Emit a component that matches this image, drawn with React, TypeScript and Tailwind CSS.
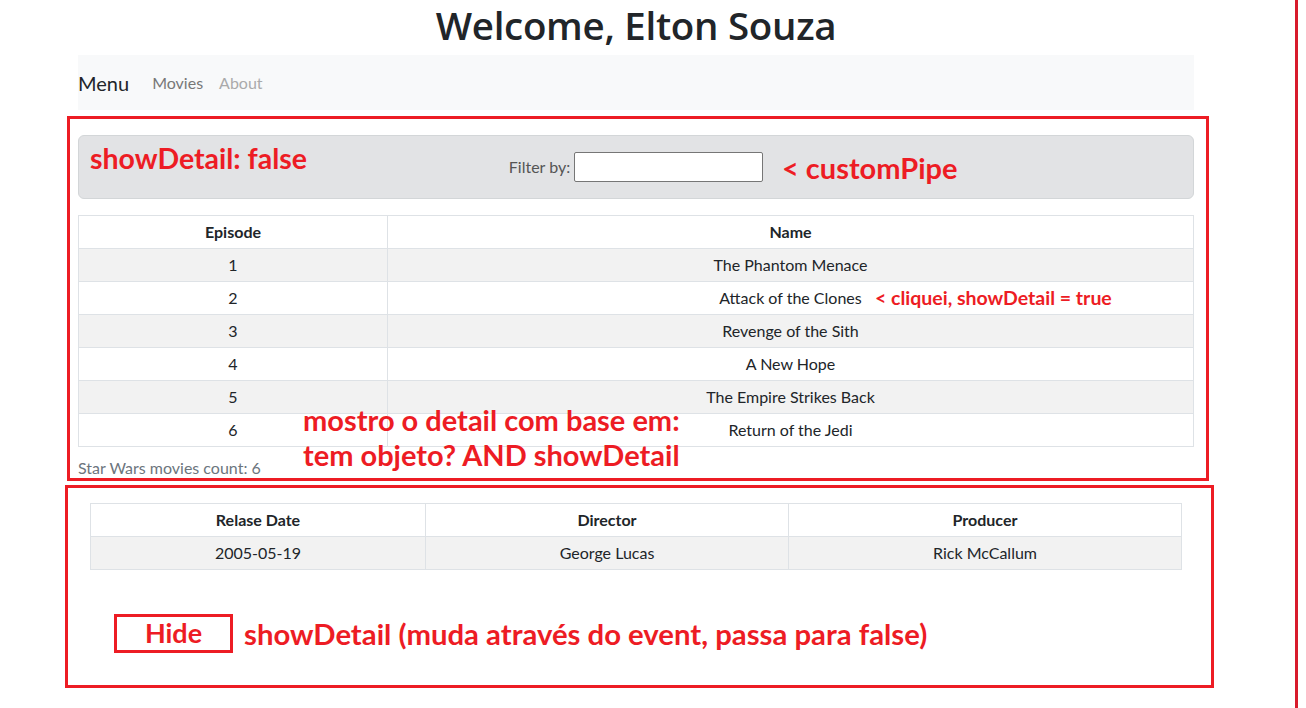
import React from "react";

const movies = [
  { ep: 1, name: "The Phantom Menace" },
  { ep: 2, name: "Attack of the Clones" },
  { ep: 3, name: "Revenge of the Sith" },
  { ep: 4, name: "A New Hope" },
  { ep: 5, name: "The Empire Strikes Back" },
  { ep: 6, name: "Return of the Jedi" },
];

const body = { fontFamily: "Lato, 'Open Sans', sans-serif" };
const anno = { fontFamily: "Lato, 'Noto Sans', sans-serif" };
const title = { fontFamily: "'Open Sans', Lato, sans-serif" };

export default function App() {
  return (
    <div className="relative w-[1306px] h-[708px] overflow-hidden bg-white text-[#212529]" style={body}>
      <div className="ml-[78px] w-[1116px] flex flex-col">
        <h1 className="text-center text-[38.5px] leading-[48px] font-semibold pt-[1px] tracking-[-0.3px]" style={title}>Welcome, Elton Souza</h1>
        <nav className="mt-[6px] h-[55px] bg-[#f8f9fa] flex items-center">
          <span className="text-[20px] text-[#212529]">Menu</span>
          <span className="ml-[23px] text-[16px] text-[#777]">Movies</span>
          <span className="ml-[16px] text-[16px] text-[#aaa]">About</span>
        </nav>
        <div className="mt-[25px] h-[64px] bg-[#e2e3e5] border border-[#d3d6d8] rounded-[6px] flex items-center justify-center">
          <label className="text-[16px] text-[#555] mr-[4px]">Filter by:</label>
          <input className="w-[189px] h-[30px] border border-[#767676] rounded-[2px] bg-white" />
        </div>
        <table className="mt-[16px] w-full border-collapse text-[16px] text-center">
          <thead>
            <tr className="h-[33px]">
              <th className="border border-[#dee2e6] w-[309px] font-bold">Episode</th>
              <th className="border border-[#dee2e6] font-bold">Name</th>
            </tr>
          </thead>
          <tbody>
            {movies.map((m, i) => (
              <tr key={m.ep} className={i % 2 === 0 ? "h-[33px] bg-[#f2f2f2]" : "h-[33px] bg-white"}>
                <td className="border border-[#dee2e6]">{m.ep}</td>
                <td className="border border-[#dee2e6]">{m.name}</td>
              </tr>
            ))}
          </tbody>
        </table>
        <div className="mt-[10px] text-[16px] leading-[22px] text-[#6c757d]">Star Wars movies count: 6</div>
        <div className="px-[12px] mt-[24px]">
          <table className="w-full border-collapse text-[16px] text-center">
            <thead>
              <tr className="h-[33px]">
                <th className="border border-[#dee2e6] w-[335px] font-bold">Relase Date</th>
                <th className="border border-[#dee2e6] w-[363px] font-bold">Director</th>
                <th className="border border-[#dee2e6] font-bold">Producer</th>
              </tr>
            </thead>
            <tbody>
              <tr className="h-[33px] bg-[#f2f2f2]">
                <td className="border border-[#dee2e6]">2005-05-19</td>
                <td className="border border-[#dee2e6]">George Lucas</td>
                <td className="border border-[#dee2e6]">Rick McCallum</td>
              </tr>
            </tbody>
          </table>
        </div>
      </div>

      {/* annotations */}
      <div className="absolute left-[67px] top-[116px] w-[1142px] h-[365px] border-[3px] border-[#ed1c24] pointer-events-none" />
      <div className="absolute left-[65px] top-[485px] w-[1149px] h-[203px] border-[3px] border-[#ed1c24] pointer-events-none" />
      <div className="absolute left-[1295px] top-0 w-[3px] h-[708px] bg-[#d81b2c]" />

      <div className="absolute left-[90px] top-[140px] text-[28.5px] leading-[36px] font-bold text-[#ed1c24]" style={anno}>showDetail: false</div>
      <div className="absolute left-[782px] top-[150px] text-[29px] leading-[36px] font-bold text-[#ed1c24]" style={anno}>&lt; customPipe</div>
      <div className="absolute left-[875px] top-[286px] text-[19.5px] leading-[24px] font-bold text-[#ed1c24]" style={anno}>&lt; cliquei, showDetail = true</div>
      <div className="absolute left-[303px] top-[402px] text-[29px] leading-[35px] font-bold text-[#ed1c24]" style={anno}>
        <div>mostro o detail com base em:</div>
        <div>tem objeto? AND showDetail</div>
      </div>
      <div className="absolute left-[114px] top-[614px] w-[119px] h-[39px] border-[3px] border-[#ed1c24] flex items-center justify-center text-[27px] font-bold text-[#ed1c24]" style={anno}>Hide</div>
      <div className="absolute left-[244px] top-[616px] text-[29.3px] leading-[36px] font-bold text-[#ed1c24]" style={anno}>showDetail (muda através do event, passa para false)</div>
    </div>
  );
}
